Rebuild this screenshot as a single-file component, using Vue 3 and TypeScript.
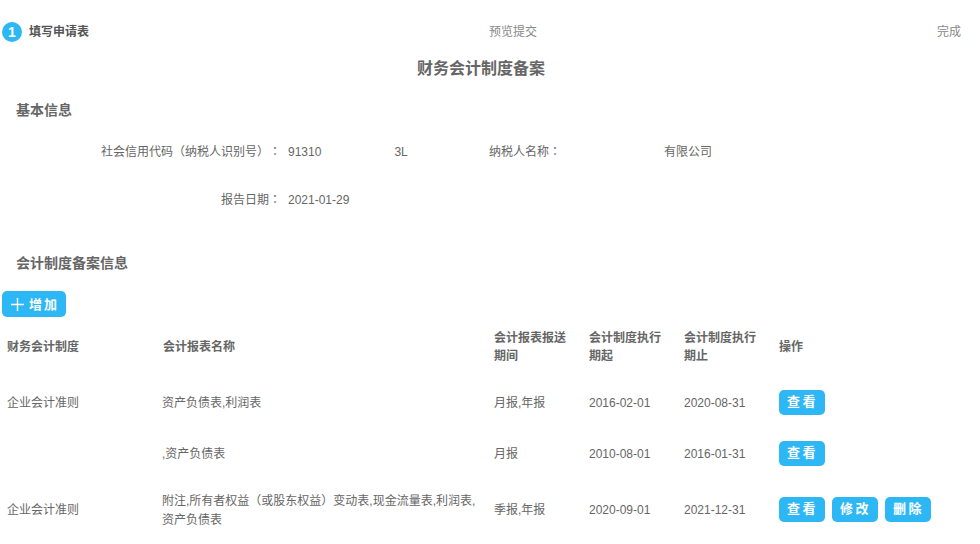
<script setup lang="ts">
interface Row {
  system: string
  name: string[]
  period: string
  start: string
  end: string
  actions: string[]
}
const rows: Row[] = [
  { system: '企业会计准则', name: ['资产负债表,利润表'], period: '月报,年报', start: '2016-02-01', end: '2020-08-31', actions: ['查看'] },
  { system: '', name: [',资产负债表'], period: '月报', start: '2010-08-01', end: '2016-01-31', actions: ['查看'] },
  { system: '企业会计准则', name: ['附注,所有者权益（或股东权益）变动表,现金流量表,利润表,', '资产负债表'], period: '季报,年报', start: '2020-09-01', end: '2021-12-31', actions: ['查看', '修改', '删除'] },
]
</script>

<template>
  <div class="page">
    <div class="steps">
      <div class="step active"><span class="num">1</span><span>填写申请表</span></div>
      <div class="step">预览提交</div>
      <div class="step">完成</div>
    </div>
    <h1 class="title">财务会计制度备案</h1>
    <h2 class="section first">基本信息</h2>
    <div class="form">
      <div class="label">社会信用代码<span class="colon">（</span>纳税人识别号<span class="colon">）：</span></div>
      <div class="value credit"><span>91310</span><span>3L</span></div>
      <div class="label2">纳税人名称<span class="colon">：</span></div>
      <div class="value company">有限公司</div>
      <div class="label">报告日期<span class="colon">：</span></div>
      <div class="value">2021-01-29</div>
    </div>
    <h2 class="section second">会计制度备案信息</h2>
    <button class="btn add" type="button">
      <svg class="plus" viewBox="0 0 13 13" width="13" height="13"><path d="M6.5 0v13M0 6.5h13" stroke="#fff" stroke-width="1.4" fill="none" /></svg>
      <span>增加</span>
    </button>
    <table class="table">
      <colgroup>
        <col class="c1" /><col class="c2" /><col class="c3" /><col class="c3" /><col class="c3" /><col />
      </colgroup>
      <thead>
        <tr>
          <th>财务会计制度</th>
          <th>会计报表名称</th>
          <th>会计报表报送<br />期间</th>
          <th>会计制度执行<br />期起</th>
          <th>会计制度执行<br />期止</th>
          <th>操作</th>
        </tr>
      </thead>
      <tbody>
        <tr v-for="(row, i) in rows" :key="i" :class="{ tall: row.name.length > 1 }">
          <td>{{ row.system }}</td>
          <td><div v-for="line in row.name" :key="line">{{ line }}</div></td>
          <td>{{ row.period }}</td>
          <td>{{ row.start }}</td>
          <td>{{ row.end }}</td>
          <td>
            <div class="actions">
              <button v-for="a in row.actions" :key="a" class="btn small" type="button">{{ a }}</button>
            </div>
          </td>
        </tr>
      </tbody>
    </table>
  </div>
</template>

<style>
html, body { margin: 0; background: #fff; overflow: hidden; }
</style>

<style scoped>
.page {
  width: 961px;
  height: 544px;
  overflow: hidden;
  font-family: "Liberation Sans", "Noto Sans CJK SC", sans-serif;
  font-size: 12px;
  color: #666;
  text-spacing-trim: space-all;
}
.steps {
  display: flex;
  justify-content: space-between;
  align-items: center;
  height: 22px;
  margin-top: 21px;
  padding-left: 2px;
  color: #888;
}
.step { display: flex; align-items: center; line-height: 22px; }
.step.active { color: #555; font-weight: 700; gap: 7px; }
.num {
  width: 20px;
  height: 20px;
  border-radius: 50%;
  background: #2db7f5;
  color: #fff;
  font-size: 14px;
  text-align: center;
  line-height: 20px;
}
.title {
  margin: 14px 0 0;
  padding-left: 1px;
  font-size: 16px;
  line-height: 24px;
  font-weight: 700;
  text-align: center;
  color: #666;
}
.section {
  margin: 0;
  padding-left: 16px;
  font-size: 14px;
  line-height: 20px;
  font-weight: 700;
  color: #666;
}
.section.first { margin-top: 19px; }
.section.second { margin-top: 29px; }
.form {
  display: grid;
  grid-template-columns: 288px 201px 175px 1fr;
  grid-auto-rows: 48px;
  margin-top: 8px;
  line-height: 48px;
}
.label { text-align: right; padding-right: 7px; }
.label2 { text-align: left; }
.colon { font-family: "Liberation Sans", "Noto Sans CJK TC", sans-serif; }
.credit { display: flex; gap: 73px; }
.btn {
  border: 0;
  padding: 0;
  background: #2db7f5;
  color: #fff;
  font-family: inherit;
  font-weight: 700;
  border-radius: 5px;
  letter-spacing: 2px;
}
.add {
  display: flex;
  align-items: center;
  justify-content: center;
  gap: 5px;
  width: 64px;
  height: 26px;
  margin: 18px 0 0 2px;
  padding: 0 0 0 2px;
  font-size: 13px;
}
.add span { margin-top: -2px; }
.small {
  width: 46px;
  height: 25px;
  padding: 0 0 2px 1px;
  font-size: 13px;
  line-height: 23px;
  letter-spacing: 2.5px;
}
.table {
  width: 961px;
  margin-top: 4px;
  border-collapse: collapse;
  table-layout: fixed;
}
.c1 { width: 156px; }
.c2 { width: 331px; }
.c3 { width: 95px; }
th, td {
  padding: 0 0 0 7px;
  text-align: left;
  vertical-align: middle;
  font-size: 12px;
  line-height: 18px;
}
th { height: 52px; padding-bottom: 4px; font-weight: 700; color: #666; }
td { height: 51px; font-weight: 400; }
td:nth-child(2) { padding-left: 6px; }
tr.tall td { height: 61px; line-height: 19px; }
tr.tall td:not(:last-child) { padding-top: 1px; }
tr.tall td:last-child { padding-bottom: 1px; }
.actions { display: flex; gap: 7px; }
</style>
